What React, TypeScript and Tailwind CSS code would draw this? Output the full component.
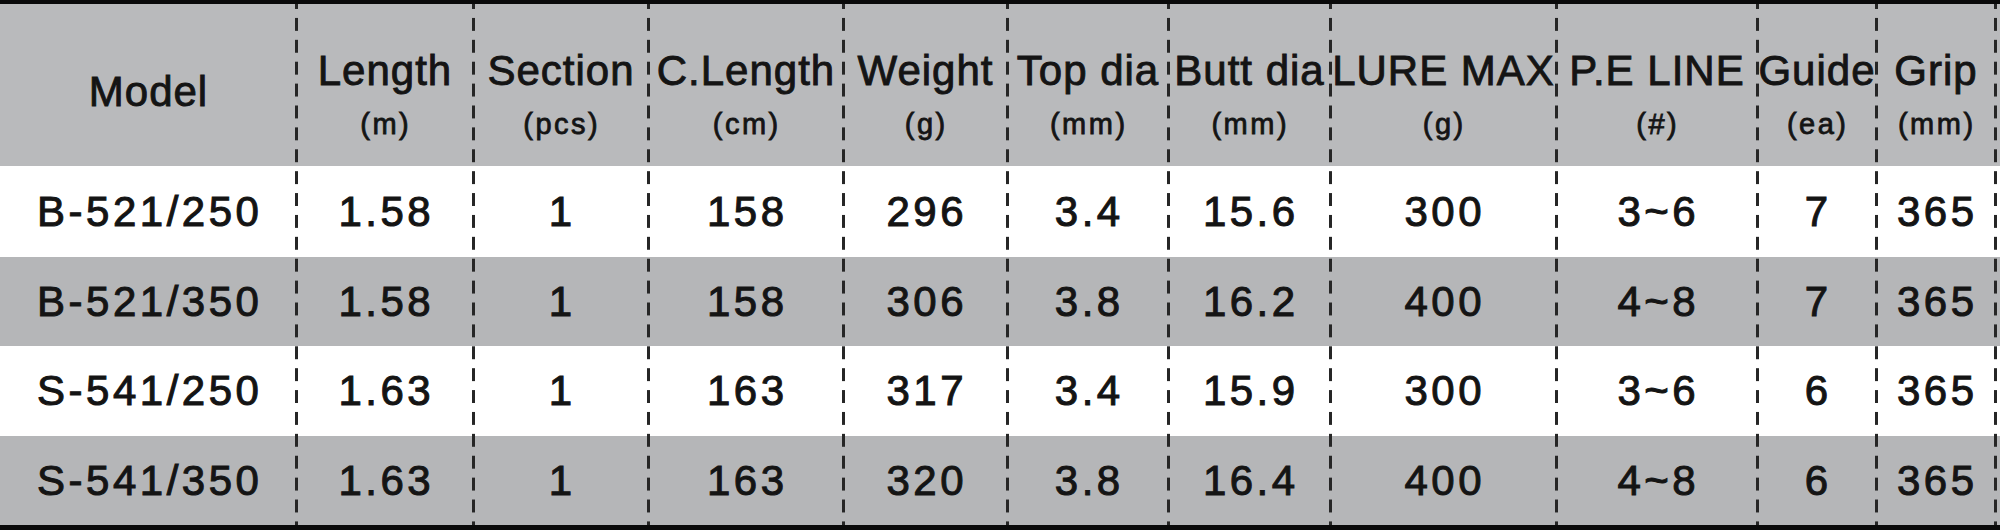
import React from "react";

type Col = { w: string; label: string; unit?: string };

const cols: Col[] = [
  { w: "w-[296px]", label: "Model" },
  { w: "w-[177px]", label: "Length", unit: "(m)" },
  { w: "w-[175px]", label: "Section", unit: "(pcs)" },
  { w: "w-[195px]", label: "C.Length", unit: "(cm)" },
  { w: "w-[164px]", label: "Weight", unit: "(g)" },
  { w: "w-[161px]", label: "Top dia", unit: "(mm)" },
  { w: "w-[162px]", label: "Butt dia", unit: "(mm)" },
  { w: "w-[226px]", label: "LURE MAX", unit: "(g)" },
  { w: "w-[201px]", label: "P.E LINE", unit: "(#)" },
  { w: "w-[119px]", label: "Guide", unit: "(ea)" },
  { w: "w-[119px]", label: "Grip", unit: "(mm)" },
];

const rows: string[][] = [
  ["B-521/250", "1.58", "1", "158", "296", "3.4", "15.6", "300", "3~6", "7", "365"],
  ["B-521/350", "1.58", "1", "158", "306", "3.8", "16.2", "400", "4~8", "7", "365"],
  ["S-541/250", "1.63", "1", "163", "317", "3.4", "15.9", "300", "3~6", "6", "365"],
  ["S-541/350", "1.63", "1", "163", "320", "3.8", "16.4", "400", "4~8", "6", "365"],
];

const rowStyles = [
  "h-[91px] bg-white",
  "h-[89px] bg-[#b5b6b8]",
  "h-[90px] bg-white",
  "h-[89px] bg-[#b5b6b8]",
];

const divider =
  "relative after:absolute after:top-0 after:bottom-0 after:right-[-1.5px] after:w-[3px] after:z-10 after:bg-repeat-y after:bg-[length:3px_21.9px] after:bg-[linear-gradient(to_bottom,#262626_0,#262626_5px,transparent_5px,transparent_14px,#262626_14px)]";

export default function App() {
  return (
    <div className="w-[2000px] h-[530px] flex flex-col bg-black font-['Liberation_Sans',Arial,sans-serif] text-[#141414]">
      <div className="h-[4px] bg-[#0a0a0a]" />
      <div className="flex h-[521px]">
        {cols.map((c, ci) => (
          <div key={ci} className={`${c.w} flex flex-col ${divider}`}>
            <div
              className={`h-[162px] bg-[#b9babc] flex flex-col items-center ${
                c.unit ? "pt-[46px]" : "pt-[67px]"
              }`}
            >
              <div className="text-[42px] leading-none font-normal tracking-[1px] pl-[1px] whitespace-nowrap [-webkit-text-stroke:0.9px_#141414]">
                {c.label}
              </div>
              {c.unit && (
                <div className="mt-[18px] text-[29px] leading-none font-normal tracking-[2.5px] pl-[2.5px] whitespace-nowrap [-webkit-text-stroke:0.8px_#141414]">
                  {c.unit}
                </div>
              )}
            </div>
            {rows.map((r, ri) => (
              <div
                key={ri}
                className={`${rowStyles[ri]} flex items-center justify-center`}
              >
                <span className="text-[42px] leading-none font-normal tracking-[3.5px] pl-[3.5px] whitespace-nowrap [-webkit-text-stroke:1px_#141414]">
                  {r[ci]}
                </span>
              </div>
            ))}
          </div>
        ))}
        <div className="w-[5px] flex flex-col">
          <div className="h-[162px] bg-[#b9babc]" />
          {rowStyles.map((s, i) => (
            <div key={i} className={s} />
          ))}
        </div>
      </div>
      <div className="h-[5px] bg-[#0a0a0a]" />
    </div>
  );
}
